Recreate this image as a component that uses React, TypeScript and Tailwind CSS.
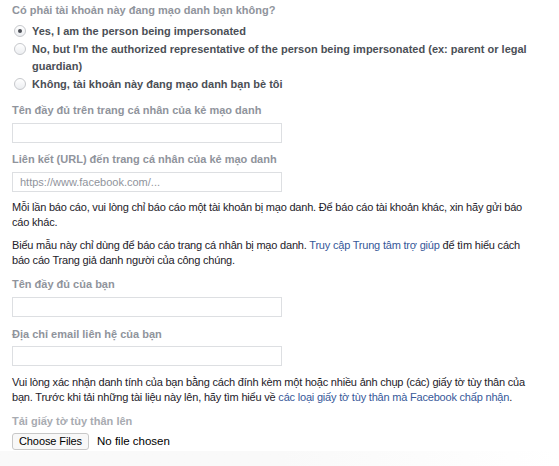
export default function App() {
  const label = "block text-[11px] font-bold text-[#90949c] leading-[16px]"
  const input =
    "block w-[270px] h-[20px] border border-[#dddfe2] bg-white px-[7px] text-[11px] text-[#1d2129] placeholder:text-[#90949c] outline-none"
  const para = "leading-[15px] pr-[8px] tracking-[-0.2px]"
  return (
    <div className="h-[466px] overflow-hidden flex flex-col bg-white font-['Liberation_Sans',Arial,sans-serif] text-[11px] text-[#1d2129]">
      <div className="px-3 pt-[2px]">
        <div className={label}>Có phải tài khoản này đang mạo danh bạn không?</div>
        <div className="mt-[5px] flex flex-col gap-[1px] text-[#4b4f56] font-bold leading-[17px]">
          <Radio checked>Yes, I am the person being impersonated</Radio>
          <Radio>
            No, but I'm the authorized representative of the person being impersonated (ex: parent or legal guardian)
          </Radio>
          <Radio>Không, tài khoản này đang mạo danh bạn bè tôi</Radio>
        </div>

        <div className={label + " mt-[9px]"}>Tên đầy đủ trên trang cá nhân của kẻ mạo danh</div>
        <input className={input + " mt-[5px]"} />

        <div className={label + " mt-[8px]"}>Liên kết (URL) đến trang cá nhân của kẻ mạo danh</div>
        <input className={input + " mt-[5px]"} placeholder="https://www.facebook.com/..." />

        <p className={para + " mt-[8px]"}>
          Mỗi lần báo cáo, vui lòng chỉ báo cáo một tài khoản bị mạo danh. Để báo cáo tài khoản khác, xin hãy gửi báo
          cáo khác.
        </p>
        <p className={para + " mt-[8px]"}>
          Biểu mẫu này chỉ dùng để báo cáo trang cá nhân bị mạo danh.{" "}
          <a className="text-[#365899]">Truy cập Trung tâm trợ giúp</a> để tìm hiểu cách báo cáo Trang giả danh người
          của công chúng.
        </p>

        <div className={label + " mt-[8px]"}>Tên đầy đủ của bạn</div>
        <input className={input + " mt-[5px]"} />

        <div className={label + " mt-[9px]"}>Địa chỉ email liên hệ của bạn</div>
        <input className={input + " mt-[4px]"} />

        <p className={para + " mt-[9px]"}>
          Vui lòng xác nhận danh tính của bạn bằng cách đính kèm một hoặc nhiều ảnh chụp (các) giấy tờ tùy thân của
          bạn. Trước khi tải những tài liệu này lên, hãy tìm hiểu về{" "}
          <a className="text-[#365899]">các loại giấy tờ tùy thân mà Facebook chấp nhận</a>.
        </p>

        <div className={label + " mt-[8px] text-[#a8abb1]"}>Tải giấy tờ tùy thân lên</div>
        <div className="mt-[4px] flex items-center gap-[8px] text-[11px] text-black">
          <span className="inline-flex h-[17px] items-center rounded-[3px] border border-[#c8c8c8] bg-[#f8f8f8] px-[6px] tracking-[-0.1px]">
            Choose Files
          </span>
          <span className="text-[11.5px]">No file chosen</span>
        </div>
      </div>
      <div className="flex-1" />
      <div className="h-[15px] shrink-0 bg-gradient-to-r from-[#f9f9f9] via-[#f9f9f9] to-white" />
    </div>
  )
}

function Radio({ checked, children }: { checked?: boolean; children: React.ReactNode }) {
  return (
    <label className="flex items-start gap-[6px]">
      <span className="mt-[2px] ml-[2px] flex h-[12px] w-[12px] shrink-0 items-center justify-center rounded-full border border-[#c6c8cc] bg-gradient-to-b from-white to-[#eceef1]">
        {checked && <span className="h-[4px] w-[4px] rounded-full bg-[#4b4f56]" />}
      </span>
      <span>{children}</span>
    </label>
  )
}
